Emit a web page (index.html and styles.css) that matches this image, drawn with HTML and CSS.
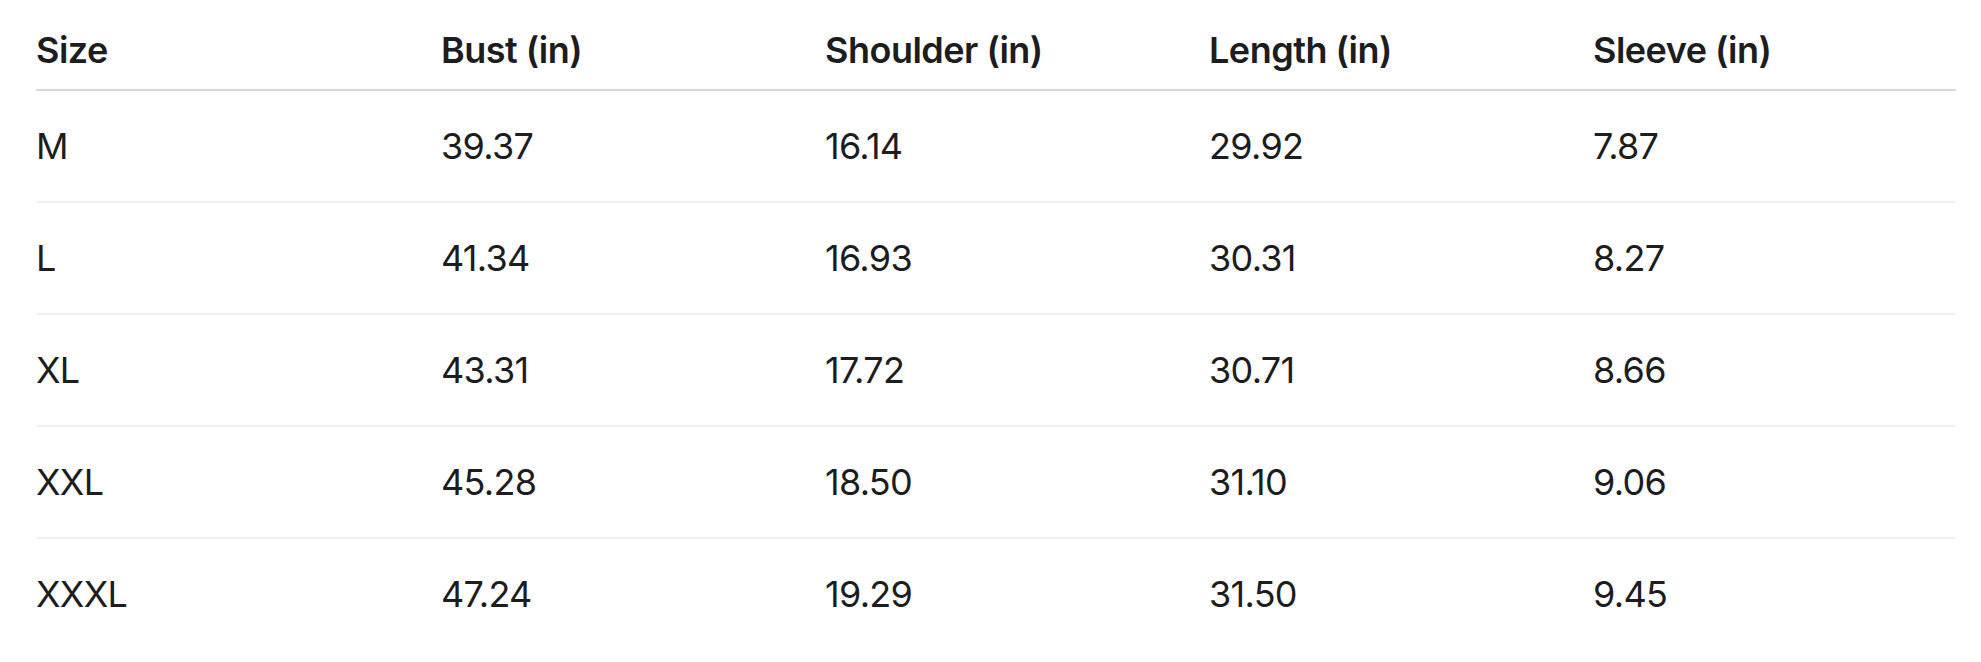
FILE: index.html
```html
<!DOCTYPE html>
<html lang="en">
<head>
<meta charset="utf-8">
<title>Size chart</title>
<link rel="stylesheet" href="styles.css">
</head>
<body>
<div class="wrap">
<table class="size-table">
  <colgroup>
    <col class="c-size">
    <col class="c-std">
    <col class="c-std">
    <col class="c-std">
    <col class="c-last">
  </colgroup>
  <thead>
    <tr><th>Size</th><th>Bust (in)</th><th>Shoulder (in)</th><th>Length (in)</th><th>Sleeve (in)</th></tr>
  </thead>
  <tbody>
    <tr><td>M</td><td>39.37</td><td>16.14</td><td>29.92</td><td>7.87</td></tr>
    <tr><td>L</td><td>41.34</td><td>16.93</td><td>30.31</td><td>8.27</td></tr>
    <tr><td>XL</td><td>43.31</td><td>17.72</td><td>30.71</td><td>8.66</td></tr>
    <tr><td>XXL</td><td>45.28</td><td>18.50</td><td>31.10</td><td>9.06</td></tr>
    <tr><td>XXXL</td><td>47.24</td><td>19.29</td><td>31.50</td><td>9.45</td></tr>
  </tbody>
</table>
</div>
</body>
</html>
```
FILE: styles.css
```css
html, body {
  margin: 0;
  padding: 0;
  background: #ffffff;
}
body {
  font-family: Inter, "Noto Sans", "Liberation Sans", sans-serif;
  color: #1d1d1f;
}
.wrap {
  padding-left: 36px;
}
.size-table {
  width: 1920px;
  border-collapse: collapse;
  table-layout: fixed;
}
.c-size { width: 405px; }
.c-std { width: 384px; }
.c-last { width: 363px; }
.size-table th,
.size-table td {
  text-align: left;
  padding: 0;
  font-size: 36px;
  line-height: 44px;
  white-space: nowrap;
}
.size-table th {
  font-weight: 600;
  letter-spacing: -0.5px;
  padding-top: 28px;
  padding-bottom: 17px;
  border-bottom: 2px solid #d8d8d8;
}
.size-table td {
  font-weight: 400;
  letter-spacing: -0.7px;
  padding-top: 33px;
  padding-bottom: 33px;
  border-bottom: 2px solid #f0f0f0;
}
.size-table tbody tr:last-child td {
  border-bottom: none;
}
```
